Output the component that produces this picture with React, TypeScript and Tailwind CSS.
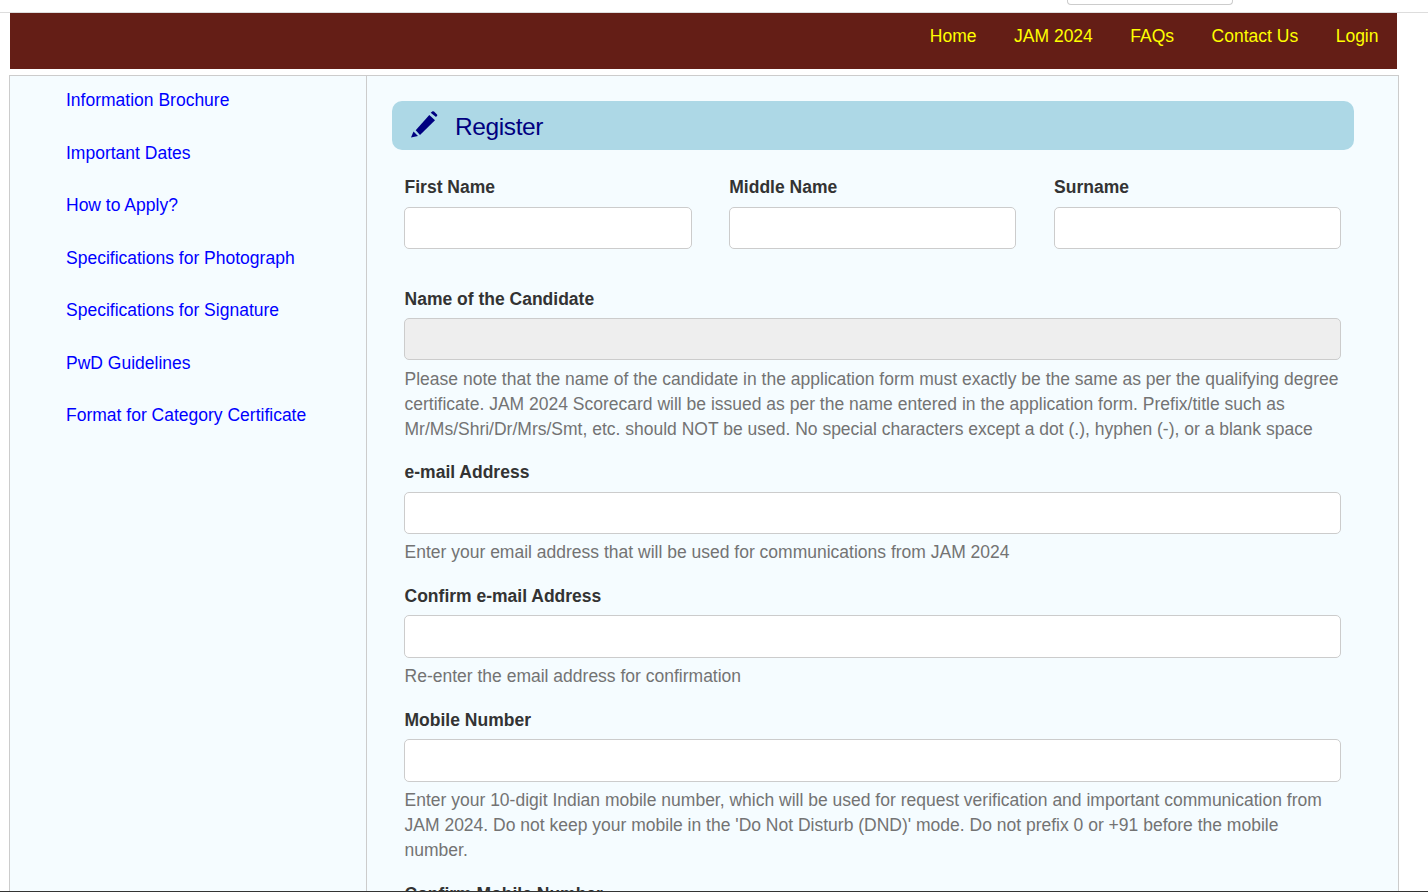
const sideLinks = [
  'Information Brochure',
  'Important Dates',
  'How to Apply?',
  'Specifications for Photograph',
  'Specifications for Signature',
  'PwD Guidelines',
  'Format for Category Certificate',
]

const navLinks = ['Home', 'JAM 2024', 'FAQs', 'Contact Us', 'Login']

function Field({ label, help, disabled }: { label: string; help?: string; disabled?: boolean }) {
  return (
    <div className="mb-[18.75px]">
      <label className="block mb-[6.25px] pl-[0.3px] font-bold text-[#333333]">{label}</label>
      <input
        type="text"
        disabled={disabled}
        className={`block w-full h-[42.5px] rounded-[5px] border border-[#cccccc] ${disabled ? 'bg-[#eeeeee]' : 'bg-white'}`}
      />
      {help && <p className="mt-[6.25px] pl-[0.3px] text-[#737373]">{help}</p>}
    </div>
  )
}

export default function App() {
  return (
    <div className="h-[892px] flex flex-col overflow-hidden bg-white font-['Liberation_Sans',Arial,sans-serif] text-[17.5px] leading-[25px]">
      {/* Top strip */}
      <div className="h-[13px] shrink-0 border-b border-[#dddddd]">
        <div className="ml-[1067px] w-[166px] h-[5px] border border-t-0 border-[#cccccc] rounded-b-[4px]" />
      </div>

      {/* Navbar */}
      <nav className="ml-[10px] w-[1387px] h-[56px] shrink-0 bg-[#641e16] flex justify-end gap-[37.5px] pr-[18.5px] pt-[10.5px]">
        {navLinks.map((link) => (
          <a key={link} className="text-[#ffff00]">
            {link}
          </a>
        ))}
      </nav>

      {/* Main box */}
      <div className="ml-[9px] mt-[6px] w-[1390px] flex-1 min-h-0 overflow-hidden flex border border-b-0 border-[#cccccc] bg-[#f5fcff]">
        <aside className="w-[357px] shrink-0 border-r border-[#cccccc] pl-[56px] pt-[12px]">
          {sideLinks.map((link) => (
            <a key={link} className="block h-[52.5px] text-[#0000ff]">
              {link}
            </a>
          ))}
        </aside>

        <main className="flex-1 pl-[25px] pt-[25px]">
          <div className="w-[962px] h-[49px] rounded-[10px] bg-[#add8e6] flex items-center pl-[18px] text-[#000080]">
            <svg width="28" height="28" viewBox="0 0 28 28" className="shrink-0 -mt-[2px]" fill="currentColor">
              <path d="M1 26.5 L3.5 20.5 L8 25 Z" />
              <path d="M5.7 19.3 L19.3 4 L25 9.3 L10 24 Z" />
              <path d="M20.7 1.7 L22.6 0.3 Q23.3 0 24 0.6 L27 3.4 Q27.5 4 27.2 4.6 L26 6 Z" />
            </svg>
            <h2 className="ml-[17px] text-[24.5px] leading-[30px] mt-[2px] tracking-[-0.4px]">Register</h2>
          </div>

          <form className="mt-[25.25px] ml-[12.25px] w-[936.75px]">
            <div className="grid grid-cols-3 gap-x-[37.5px] mb-[18.75px]">
              <Field label="First Name" />
              <Field label="Middle Name" />
              <Field label="Surname" />
            </div>
            <Field
              label="Name of the Candidate"
              disabled
              help="Please note that the name of the candidate in the application form must exactly be the same as per the qualifying degree certificate. JAM 2024 Scorecard will be issued as per the name entered in the application form. Prefix/title such as Mr/Ms/Shri/Dr/Mrs/Smt, etc. should NOT be used. No special characters except a dot (.), hyphen (-), or a blank space"
            />
            <Field label="e-mail Address" help="Enter your email address that will be used for communications from JAM 2024" />
            <Field label="Confirm e-mail Address" help="Re-enter the email address for confirmation" />
            <Field
              label="Mobile Number"
              help="Enter your 10-digit Indian mobile number, which will be used for request verification and important communication from JAM 2024. Do not keep your mobile in the 'Do Not Disturb (DND)' mode. Do not prefix 0 or +91 before the mobile number."
            />
            <Field label="Confirm Mobile Number" />
          </form>
        </main>
      </div>

      {/* Bottom edge of the window */}
      <div className="h-px shrink-0 bg-[#333333]" />
    </div>
  )
}
